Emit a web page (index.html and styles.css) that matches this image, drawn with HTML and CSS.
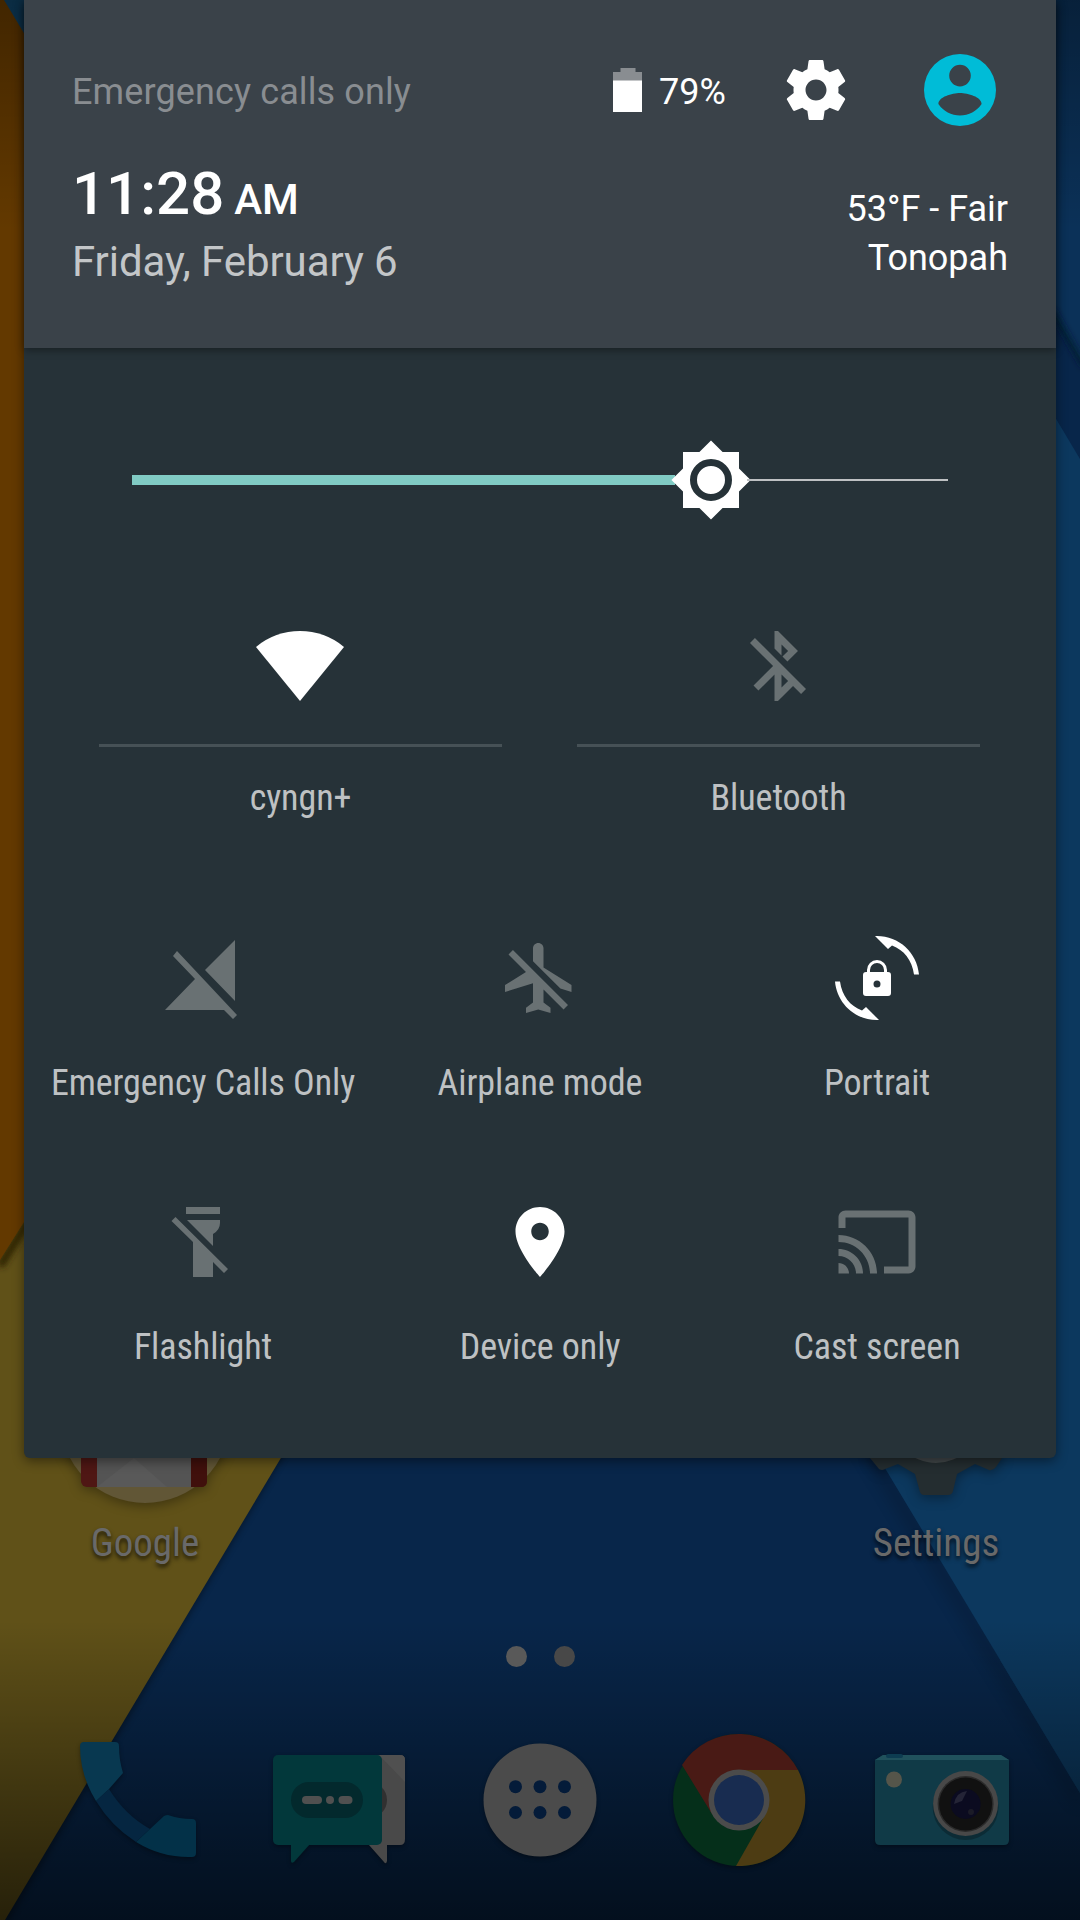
FILE: index.html
```
<!DOCTYPE html>
<html lang="en">
<head>
<meta charset="utf-8">
<title>Quick settings</title>
<link rel="stylesheet" href="styles.css">
</head>
<body>
<div class="screen">
  <svg class="wallpaper" viewBox="0 0 1080 1920" aria-hidden="true">
    <defs>
      <linearGradient id="topShade" x1="0" y1="0" x2="0" y2="1"><stop offset="0" stop-opacity=".34"/><stop offset="1" stop-opacity="0"/></linearGradient>
      <linearGradient id="bottomShade" x1="0" y1="0" x2="0" y2="1"><stop offset="0" stop-opacity="0"/><stop offset="1" stop-opacity=".6"/></linearGradient>
      <filter id="soft" x="-20%" y="-20%" width="140%" height="140%"><feGaussianBlur stdDeviation="8"/></filter>
      <filter id="edge" x="-50%" y="-50%" width="200%" height="200%"><feGaussianBlur stdDeviation="3"/></filter>
    </defs>
    <rect width="1080" height="1920" fill="#08264a"/>
    <path d="M1000 0H1080V358L1000 220Z" fill="#0b3158"/>
    <path d="M1052 310L1084 366" stroke="#041a30" stroke-width="5" filter="url(#edge)"/>
    <path d="M1080 459L1000 325V1660L1080 1793Z" fill="#0c385e"/>
    <path d="M1080 1793L760 1261V1281L1080 1808Z" fill="#000" opacity=".25" filter="url(#soft)"/>
    <path d="M1080 1793L760 1260H1080Z" fill="#0c385e"/>
    <path d="M0 1260L400 1260L8 1922H0Z" fill="#000" opacity=".35" filter="url(#edge)"/>
    <path d="M0 1180H447L5 1920H0Z" fill="#605118"/>
    <path d="M0 1266L60 1170" stroke="#2c2206" stroke-width="8" filter="url(#edge)"/>
    <path d="M0 0H60V1165L0 1260Z" fill="#633900"/>
    <path d="M4 0H60V93Z" fill="#104264"/>
    <rect width="1080" height="230" fill="url(#topShade)"/>
    <rect y="1620" width="1080" height="300" fill="url(#bottomShade)"/>
  </svg>

  <main class="home">
    <div class="apps">
      <div class="app">
        <svg class="app-icon" viewBox="0 0 180 180">
          <circle cx="90" cy="85" r="85" fill="#615636"/>
          <rect x="26" y="60" width="126" height="94" rx="6" fill="#4f1714"/>
          <path d="M136 60H152V148Q152 154 146 154H136Z" fill="#40100c"/>
          <path d="M42 60H136V154H42Z" fill="#545454"/>
          <path d="M42 154L79 125L112 154Z" fill="#595959"/>
        </svg>
        <span class="app-name cond">Google</span>
      </div>
      <div class="app">
        <svg class="app-icon" viewBox="0 0 180 180">
          <path d="M24 125L33 136Q36 138 39 136L52 131L69 141L74 159Q75 162 78 162H102Q106 162 107 158L111 141L129 131L143 137Q147 138 150 134L156 125V60H24Z" fill="#242d30"/>
          <circle cx="90" cy="85" r="45" fill="#42484a"/>
        </svg>
        <span class="app-name cond">Settings</span>
      </div>
    </div>
    <div class="pager"><i class="dot dot-on"></i><i class="dot"></i></div>
    <nav class="dock">
      <svg viewBox="0 0 144 144">
        <path d="M30 73L43 61Q59 87 84 101L70 114Q45 98 30 73Z" fill="#052641"/>
        <path d="M18 14H49Q53 14 53 18Q53 32 57 45L43 61L30 73Q14 47 14 18Q14 14 18 14Z" fill="#083850"/>
        <path d="M84 101L98 88Q100 87 102 87Q113 91 126 91Q130 91 130 95V125Q130 129 126 129Q96 130 70 114Z" fill="#033148"/>
      </svg>
      <svg viewBox="0 0 144 144">
        <path d="M100 27H133Q138 27 138 32V111Q138 117 133 117H120V133Q119 137 117 134L102 117Z" fill="#494949"/>
        <path d="M114 29L138 54V32Q138 27 133 27H112Z" fill="#505050"/>
        <circle cx="102" cy="72" r="18" fill="#303030"/>
        <rect x="6" y="27" width="109" height="90" rx="5" fill="#02383b"/>
        <path d="M24 116H43L27 134Q24 136 24 133Z" fill="#02383b"/>
        <rect x="24" y="54" width="72" height="36" rx="18" fill="#03292d"/>
        <rect x="35" y="68" width="20" height="8" rx="4" fill="#505050"/><circle cx="63" cy="72" r="4" fill="#505050"/><rect x="71.500" y="68" width="14" height="8" rx="4" fill="#505050"/>
      </svg>
      <svg viewBox="0 0 144 144">
        <circle cx="72" cy="72" r="56.500" fill="#4b4b4b"/>
        <g fill="#041b39"><circle cx="47.500" cy="58.700" r="6.500"/><circle cx="72" cy="58.700" r="6.500"/><circle cx="96.500" cy="58.700" r="6.500"/><circle cx="47.500" cy="84.500" r="6.500"/><circle cx="72" cy="84.500" r="6.500"/><circle cx="96.500" cy="84.500" r="6.500"/></g>
      </svg>
      <svg viewBox="0 0 144 144">
        <circle cx="70" cy="72" r="66" fill="#052f1a"/>
        <path d="M13 37A67 67 0 0 1 129 42L70 72L43 86Z" fill="#491a15"/>
        <path d="M70 42H129A66 66 0 0 1 67 138L96 87Z" fill="#4d3c13"/>
        <circle cx="70" cy="72" r="30.500" fill="#4b4b4b"/><circle cx="70" cy="72" r="25" fill="#182c50"/>
      </svg>
      <svg viewBox="0 0 144 144">
        <path d="M5 32L13 27H131L139 32V112Q139 117 134 117H10Q5 117 5 112Z" fill="#103a47"/>
        <path d="M5 32L13 27H131L139 32Z" fill="#20515c"/>
        <rect x="16" y="26" width="17" height="4" rx="2" fill="#0d3c51"/>
        <circle cx="24" cy="51.500" r="8" fill="#55554a"/>
        <circle cx="95.600" cy="79" r="33" fill="#000" opacity=".25"/>
        <circle cx="95.600" cy="75.500" r="32.500" fill="#484848"/><circle cx="95.600" cy="76" r="28" fill="#2a2a2a"/><circle cx="95.600" cy="76" r="26.500" fill="#111"/>
        <circle cx="95.600" cy="76" r="15" fill="#0b0b20"/><path d="M84 76Q86 64 97 63L92 73Z" fill="#242436"/><circle cx="101" cy="84" r="3" fill="#1b1b27"/>
      </svg>
    </nav>
  </main>

  <section class="panel">
    <header class="header">
      <div class="status">
        <span class="carrier">Emergency calls only</span>
        <svg class="battery" viewBox="0 0 29 44"><path d="M7.500 0H22.500V4H29V13H0V4H7.500Z" fill="#898d91"/><path d="M0 12.500H29V44H0Z" fill="#fff"/></svg>
        <span class="percent">79%</span>
        <svg class="gear" viewBox="0 0 24 24"><path fill="#fff" d="M19.430 12.980c.040-.320.070-.640.070-.980s-.030-.660-.070-.980l2.110-1.650c.190-.150.240-.420.120-.640l-2-3.460c-.120-.220-.390-.300-.610-.220l-2.490 1c-.520-.400-1.080-.730-1.690-.980l-.380-2.650C14.460 2.180 14.250 2 14 2h-4c-.250 0-.460.180-.490.420l-.380 2.650c-.610.250-1.170.590-1.690.980l-2.490-1c-.230-.090-.490 0-.610.220l-2 3.460c-.130.220-.070.490.120.640l2.110 1.650c-.040.320-.070.650-.070.980s.030.660.070.980l-2.110 1.650c-.190.150-.240.420-.120.640l2 3.460c.120.220.390.300.610.220l2.490-1c.520.400 1.080.730 1.690.980l.380 2.650c.030.240.240.420.490.420h4c.250 0 .460-.180.490-.420l.380-2.650c.610-.250 1.170-.590 1.690-.980l2.490 1c.230.090.490 0 .610-.220l2-3.460c.120-.220.070-.490-.120-.640l-2.110-1.650zM12 15.500c-1.930 0-3.500-1.570-3.500-3.500s1.570-3.500 3.500-3.500 3.500 1.570 3.500 3.500-1.570 3.500-3.500 3.500z"/></svg>
        <svg class="avatar" viewBox="0 0 72 72"><path fill="#00bcd7" fill-rule="evenodd" d="M36 0A36 36 0 1 1 36 72A36 36 0 1 1 36 0ZM36 10.800A10.800 10.800 0 1 0 36 32.400A10.800 10.800 0 1 0 36 10.800ZM36 39C28 39 14.400 43 14.400 50A26 26 0 0 0 57.600 50C57.600 43 44 39 36 39Z"/></svg>
      </div>
      <div class="info">
        <div class="when">
          <div class="time">11:28<span class="ampm">AM</span></div>
          <div class="date">Friday, February 6</div>
        </div>
        <div class="weather">53°F - Fair<br>Tonopah</div>
      </div>
    </header>

    <div class="brightness">
      <div class="track-on"></div>
      <svg class="thumb" viewBox="0 0 24 24"><path fill="#fff" d="M20 8.690V4h-4.690L12 .69 8.690 4H4v4.690L.69 12 4 15.310V20h4.690L12 23.310 15.310 20H20v-4.690L23.310 12z"/><circle cx="12" cy="12" r="5" fill="none" stroke="#263238" stroke-width="2"/></svg>
      <div class="track-off"></div>
    </div>

    <div class="wide-tiles">
      <div class="tile wide on">
        <svg class="icon" viewBox="0 0 84 84"><path transform="translate(0 -1)" d="M-2 24A68.500 68.500 0 0 1 86 24L42 78Z"/></svg>
        <span class="label cond">cyngn+</span>
      </div>
      <div class="tile wide">
        <svg class="icon" viewBox="0 0 24 24"><path d="M13 5.830l1.880 1.880-1.600 1.600 1.410 1.410 3.020-3.020L12 2h-1v5.030l2 2v-3.200zM5.410 4L4 5.410 10.590 12 5 17.590 6.410 19 11 14.410V22h1l4.290-4.290 2.300 2.290L20 18.590 5.410 4zM13 18.170v-3.760l1.880 1.880L13 18.170z"/></svg>
        <span class="label cond">Bluetooth</span>
      </div>
    </div>

    <div class="tiles">
      <div class="tile">
        <svg class="icon" viewBox="0 0 84 84"><path d="M74 4V65L44 34ZM16 15L76 79L72 83L63 74H4L34 43L12 20Z"/></svg>
        <span class="label cond">Emergency Calls Only</span>
      </div>
      <div class="tile">
        <svg class="icon" viewBox="0 0 24 24"><path d="M13 9V3.500c0-.83-.67-1.500-1.500-1.500S10 2.670 10 3.500v3.680l7.830 7.830L21 16v-2l-8-5zM3 5.270l4.990 4.990L2 14v2l8-2.500V19l-2 1.500V22l3.500-1 3.500 1v-1.500L13 19v-3.730L18.730 21 20 19.730 4.270 4 3 5.270z"/></svg>
        <span class="label cond">Airplane mode</span>
      </div>
      <div class="tile on">
        <svg class="icon" viewBox="0 0 84 84"><path id="turn" d="M40 0C63 -1 82 16 84 38.500H79C77 24 69 14 57 9.500L53 13Z"/><use href="#turn" transform="rotate(180 42 42)"/><path fill-rule="evenodd" d="M32 36V34A10 10 0 0 1 52 34V36H53Q56 36 56 39V57Q56 60 53 60H31Q28 60 28 57V39Q28 36 31 36ZM35 36H49V34A7 7 0 0 0 35 34ZM42 44.500A3.500 3.500 0 1 0 42 51.500A3.500 3.500 0 1 0 42 44.500Z"/></svg>
        <span class="label cond">Portrait</span>
      </div>
      <div class="tile">
        <svg class="icon" viewBox="0 0 84 84"><path d="M25 7H59V14H25ZM26 20H59V23Q59 30 52 34V46ZM14.500 17L67 69L63 73L52 62V77H32V42L10.500 21Z"/></svg>
        <span class="label cond">Flashlight</span>
      </div>
      <div class="tile on">
        <svg class="icon" viewBox="0 0 24 24"><path d="M12 2C8.130 2 5 5.130 5 9c0 5.250 7 13 7 13s7-7.750 7-13c0-3.870-3.130-7-7-7zm0 9.500c-1.380 0-2.500-1.120-2.500-2.500s1.120-2.500 2.500-2.500 2.500 1.120 2.500 2.500-1.120 2.500-2.500 2.500z"/></svg>
        <span class="label cond">Device only</span>
      </div>
      <div class="tile">
        <svg class="icon" viewBox="0 0 24 24"><path d="M21 3H3c-1.100 0-2 .9-2 2v3h2V5h18v14h-7v2h7c1.100 0 2-.9 2-2V5c0-1.100-.9-2-2-2zM1 18v3h3c0-1.660-1.340-3-3-3zm0-4v2c2.760 0 5 2.240 5 5h2c0-3.870-3.130-7-7-7zm0-4v2c4.970 0 9 4.030 9 9h2c0-6.080-4.930-11-11-11z"/></svg>
        <span class="label cond">Cast screen</span>
      </div>
    </div>
  </section>
</div>
</body>
</html>
```

FILE: styles.css
```
* { box-sizing: border-box; }
body { margin: 0; background: #08264a; font-family: Roboto, sans-serif; }
svg { display: block; flex: none; }

.screen { position: relative; width: 1080px; height: 1920px; overflow: hidden; }
.wallpaper { position: absolute; inset: 0; width: 1080px; height: 1920px; }
.cond { font-family: "Roboto Condensed", Roboto, sans-serif; font-stretch: 75%; white-space: nowrap; }

/* Home screen, dimmed under the shade */
.home { position: relative; height: 1920px; padding-top: 1333px; display: flex; flex-direction: column; }
.apps { display: flex; justify-content: space-between; padding: 0 54px 0 55px; }
.app { width: 180px; display: flex; flex-direction: column; align-items: center; }
.app-icon { width: 180px; height: 180px; filter: drop-shadow(0 3px 6px rgba(0,0,0,.35)); }
.app-name { margin-top: 7px; font-size: 39px; line-height: 46px; color: #696969; text-shadow: 0 3px 4px rgba(0,0,0,.7); }
.pager { display: flex; justify-content: center; gap: 27px; margin-top: 80px; }
.dot { width: 21px; height: 21px; border-radius: 50%; background: #484848; }
.dot-on { background: #595959; }
.dock { display: flex; gap: 57px; padding-left: 66px; margin-top: 61px; }
.dock svg { width: 144px; height: 144px; filter: drop-shadow(0 2px 2px rgba(0,0,0,.35)); }

/* Pulled-down shade */
.panel { position: absolute; top: 0; left: 24px; width: 1032px; height: 1458px; background: #263238; border-radius: 0 0 6px 6px; box-shadow: 0 3px 12px rgba(0,0,0,.45); }
.header { height: 348px; padding: 54px 48px 0; background: #3a4249; color: #fff; box-shadow: 0 2px 8px rgba(0,0,0,.4); }
.status { display: flex; align-items: center; height: 72px; font-size: 36px; line-height: 42px; }
.carrier { flex: 1; padding-top: 4px; color: #898d91; letter-spacing: .12px; }
.battery { width: 29px; height: 44px; margin-right: 17px; }
.percent { width: 66px; padding-top: 4px; margin-right: 55px; }
.gear { width: 72px; height: 72px; margin-right: 72px; }
.avatar { width: 72px; height: 72px; margin-right: 12px; }
.info { display: flex; justify-content: space-between; padding-top: 33px; }
.time { font-size: 60px; line-height: 70px; font-weight: 500; }
.ampm { font-size: 42px; margin-left: 10px; }
.date { margin-top: 2px; font-size: 42px; line-height: 50px; color: #c3c6c8; letter-spacing: -.08px; }
.weather { padding-top: 26px; font-size: 36px; line-height: 49px; text-align: right; }

.brightness { display: flex; align-items: center; height: 84px; margin: 90px 108px 0; }
.track-on { width: 543px; height: 10px; background: #80cbc4; }
.thumb { width: 84px; height: 84px; margin: 0 -6px; }
.track-off { flex: 1; height: 2px; background: #bec1c3; }

.tile { display: flex; flex-direction: column; align-items: center; min-width: 0; }
.icon { width: 84px; height: 84px; overflow: visible; fill: #697173; }
.on .icon { fill: #fff; }
.label { font-size: 36px; line-height: 42px; color: #bec1c3; letter-spacing: -.07px; }
.wide-tiles { display: grid; grid-template-columns: 403px 403px; column-gap: 75px; margin: 102px 0 0 75px; }
.wide .icon { margin: 0 2px 36px 0; }
.wide .label { width: 100%; border-top: 3px solid #465156; padding-top: 30px; text-align: center; }
.tiles { display: grid; grid-template-columns: repeat(3, 337px); justify-content: center; row-gap: 96px; margin-top: 117px; }
.tiles .label { margin-top: 42px; }
```
